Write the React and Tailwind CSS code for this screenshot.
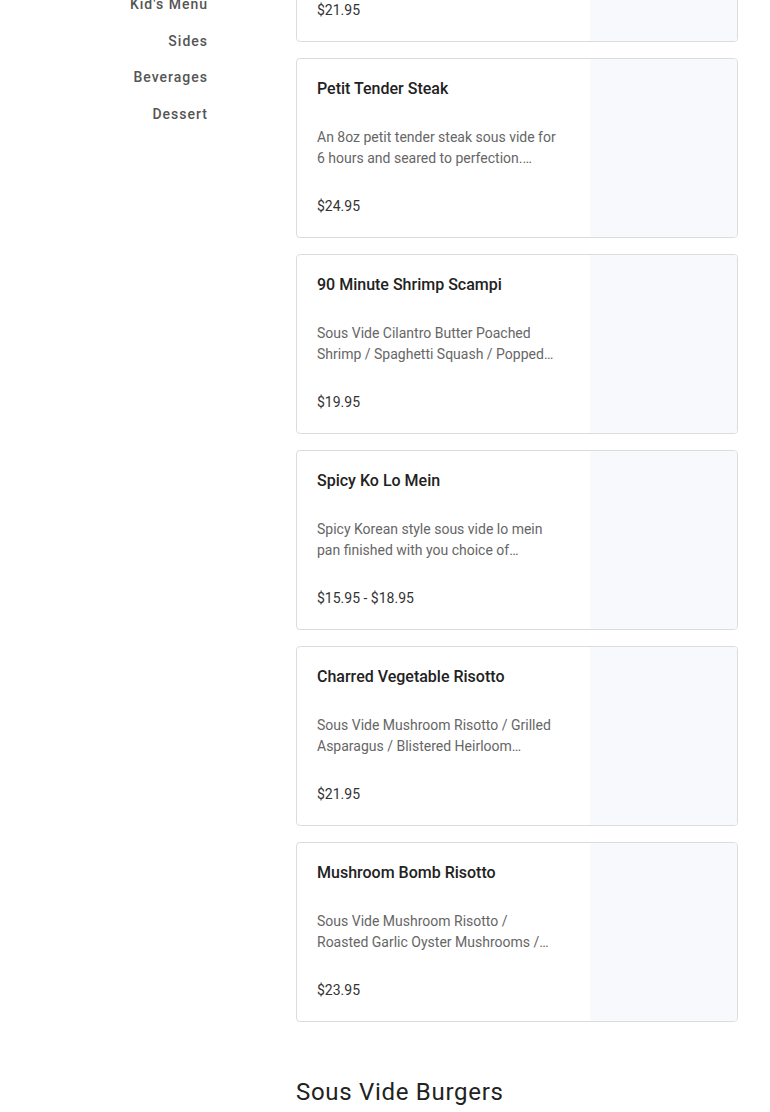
const items = [
  { name: "Charred Chicken", desc: "Sous vide chicken breast finished on the grill and served with seasonal sides.", price: "$21.95" },
  { name: "Petit Tender Steak", desc: "An 8oz petit tender steak sous vide for 6 hours and seared to perfection. Served with roasted potatoes.", price: "$24.95" },
  { name: "90 Minute Shrimp Scampi", desc: "Sous Vide Cilantro Butter Poached Shrimp / Spaghetti Squash / Popped Capers / Garlic Toast", price: "$19.95" },
  { name: "Spicy Ko Lo Mein", desc: "Spicy Korean style sous vide lo mein pan finished with you choice of vegetables, chicken or shrimp.", price: "$15.95 - $18.95" },
  { name: "Charred Vegetable Risotto", desc: "Sous Vide Mushroom Risotto / Grilled Asparagus / Blistered Heirloom Tomatoes / Parmesan", price: "$21.95" },
  { name: "Mushroom Bomb Risotto", desc: "Sous Vide Mushroom Risotto / Roasted Garlic Oyster Mushrooms / Truffle Oil", price: "$23.95" },
];

const nav = ["Kid's Menu", "Sides", "Beverages", "Dessert"];

function MenuCard({ item }) {
  return (
    <div className="flex h-[180px] overflow-hidden rounded-[4px] border border-[#dcdcdc] bg-white">
      <div className="flex-1 pl-5 pr-[33px] pt-5">
        <h3 className="text-[16px] font-medium leading-[20px] text-[#222]">{item.name}</h3>
        <p className="mt-[28px] line-clamp-2 text-[14px] leading-[21px] text-[#666]">{item.desc}</p>
        <p className="mt-[27px] text-[14px] leading-[20px] text-[#333]">{item.price}</p>
      </div>
      <div className="w-[147px] shrink-0 bg-[#f7f9fc]" />
    </div>
  );
}

export default function App() {
  return (
    <div className="h-[1112px] overflow-hidden bg-white" style={{ fontFamily: "Roboto, 'Liberation Sans', sans-serif" }}>
      <div className="flex">
        <aside className="w-[208px] shrink-0">
          <ul className="mt-[-14px] text-right">
            {nav.map((n) => (
              <li key={n} className="flex h-[36.7px] items-center justify-end text-[14px] font-medium tracking-[1px] text-[#555]">
                {n}
              </li>
            ))}
          </ul>
        </aside>
        <main className="ml-[88px] mt-[-138px] w-[442px]">
          <div className="flex flex-col gap-4">
            {items.map((it, i) => (
              <MenuCard key={i} item={it} />
            ))}
          </div>
          <h2 className="mt-[54px] text-[24px] leading-[32px] tracking-[0.7px] text-[#222]">Sous Vide Burgers</h2>
        </main>
      </div>
    </div>
  );
}
